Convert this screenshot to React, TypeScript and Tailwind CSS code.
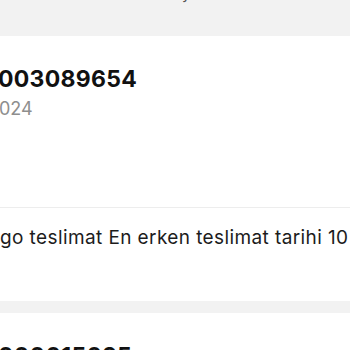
import React from 'react'

const OrderCard = ({ no, date, note }: { no: string; date: string; note: string }) => {
  return (
    <div className="bg-white h-[265px] flex flex-col">
      <div className="pt-[29px] -ml-[2px] text-[23px] leading-[28px] font-bold tracking-[0.3px] text-[#111111] whitespace-nowrap">
        {no}
      </div>
      <div className="mt-[5px] -ml-[1px] text-[18px] leading-[22px] text-[#8e8e8e] whitespace-nowrap">
        {date}
      </div>
      <div className="mt-[87px] h-px bg-[#ededed]" />
      <div className="mt-[18px] text-[19px] leading-[24px] tracking-[0.4px] text-[#1c1c1c] whitespace-nowrap">
        {note}
      </div>
    </div>
  )
}

export default function App() {
  return (
    <div className="w-[350px] h-[350px] overflow-hidden bg-[#f2f2f2] font-['Inter',sans-serif]">
      <div className="h-[36px] overflow-hidden">
        <div className="-mt-[15px] ml-[182px] text-[15px] leading-[18px] text-[#555555]">y</div>
      </div>
      <OrderCard no="003089654" date="024" note="go teslimat En erken teslimat tarihi 10 Ekim" />
      <div className="h-[12px]" />
      <OrderCard no="000015025" date="024" note="go teslimat" />
    </div>
  )
}
